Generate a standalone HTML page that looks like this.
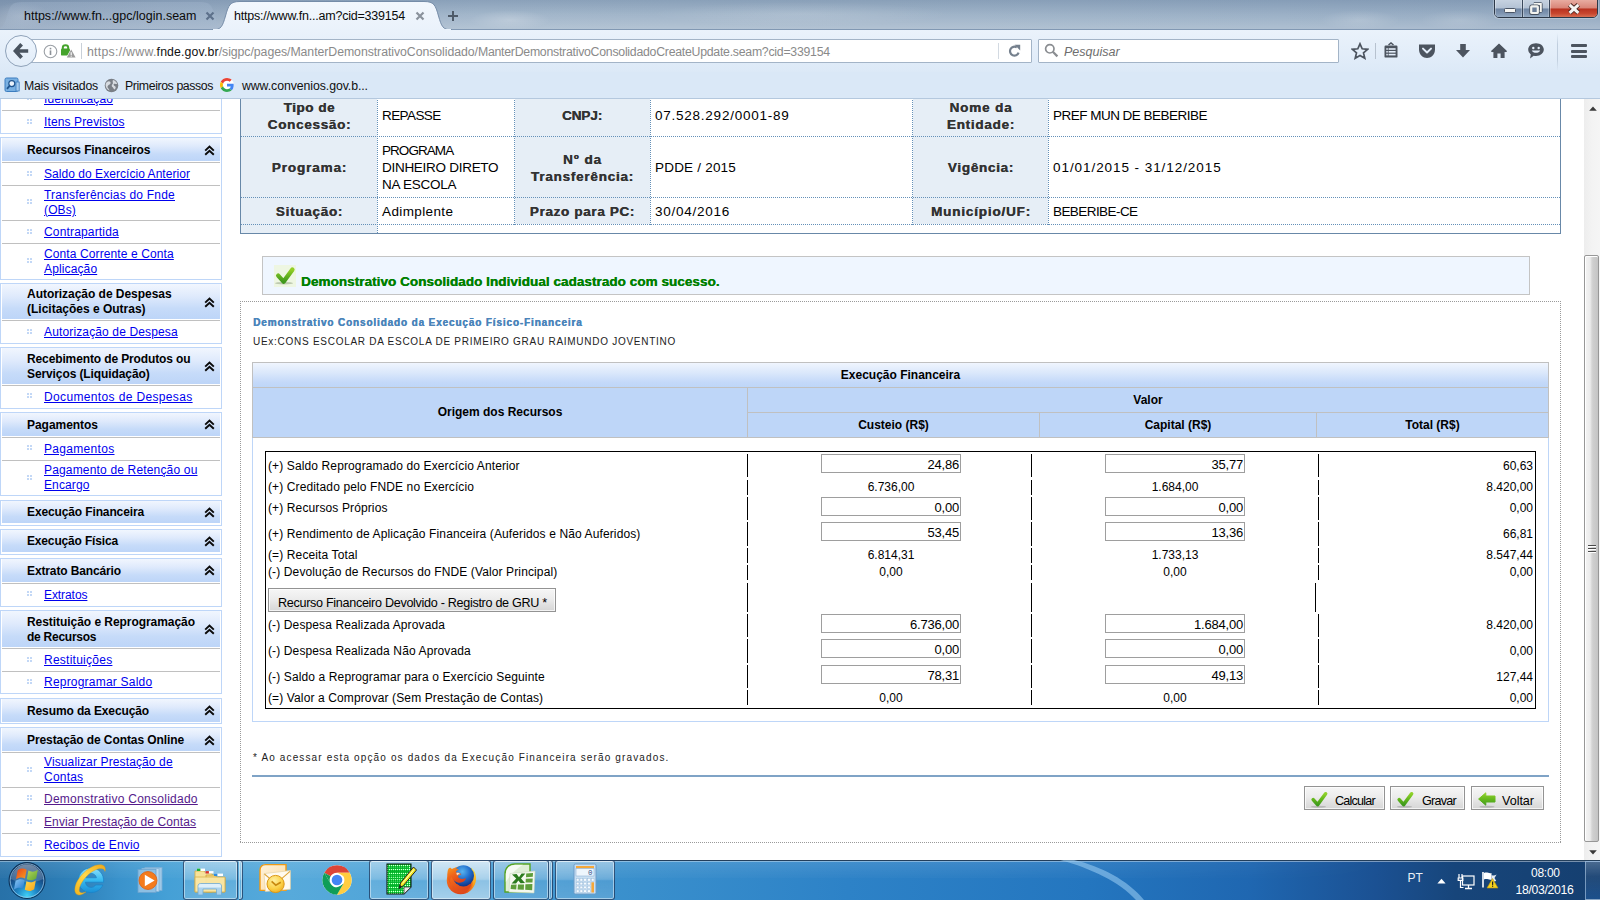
<!DOCTYPE html>
<html>
<head>
<meta charset="utf-8">
<title>SiGPC</title>
<style>
*{box-sizing:border-box;margin:0;padding:0}
html,body{width:1600px;height:900px;overflow:hidden;background:#fff;font-family:"Liberation Sans",sans-serif;font-size:12px;color:#000}
.abs{position:absolute}
#titlebar{position:absolute;left:0;top:0;width:1600px;height:30px;background:linear-gradient(90deg,#8b9fb7 0%,#99adc3 10%,#a3b7cb 30%,#a1b5c9 55%,#9cb1c7 80%,#96abc2 100%);}
#titlebar .shade{position:absolute;left:0;top:0;width:1600px;height:30px;background:radial-gradient(ellipse 40px 10px at 510px 20px,rgba(255,255,255,.22),rgba(255,255,255,0)),radial-gradient(ellipse 150px 12px at 800px 14px,rgba(255,255,255,.13),rgba(255,255,255,0)),radial-gradient(ellipse 40px 10px at 1360px 20px,rgba(255,255,255,.16),rgba(255,255,255,0)),radial-gradient(ellipse 40px 10px at 1460px 20px,rgba(255,255,255,.14),rgba(255,255,255,0)),radial-gradient(ellipse 30px 14px at 20px 16px,rgba(255,255,255,.2),rgba(255,255,255,0)),linear-gradient(180deg,rgba(95,122,155,.36) 0%,rgba(255,255,255,0) 50%,rgba(255,255,255,.2) 100%)}
#navbar{position:absolute;left:0;top:30px;width:1600px;height:42px;background:linear-gradient(180deg,#eaf2fb 0%,#e2edf9 60%,#dce9f7 100%)}
#bmbar{position:absolute;left:0;top:72px;width:1600px;height:27px;background:#dae8f7;border-bottom:1px solid #b4c8de}
#page{position:absolute;left:0;top:99px;width:1584px;height:761px;background:#fff;overflow:hidden}
#pagein{position:absolute;left:0;top:-99px;width:1584px;height:900px}
#vscroll{position:absolute;left:1584px;top:99px;width:16px;height:761px;background:#f0f0f0}
#taskbar{position:absolute;left:0;top:858px;width:1600px;height:42px;background:linear-gradient(90deg,#2771a8 0%,#2a78b0 2.5%,#2f82bb 5%,#3a93cc 7.5%,#45a0d6 10.5%,#57aadb 18%,#52a6d9 23%,#469cd4 31%,#3b91cd 38%,#2d82c7 53%,#2476bf 68%,#1f67b1 78%,#1b5193 86%,#17457a 91%,#153f70 100%)}
.tabtxt{position:absolute;top:9px;font-size:12.5px;color:#0a0a0a;white-space:nowrap}
.bm{position:absolute;top:79px;font-size:12.3px;color:#111;white-space:nowrap}
</style>
</head>
<body>
<!-- ===== TITLE BAR / TABS ===== -->
<div id="titlebar"><div class="shade"></div>
<svg class="abs" style="left:0;top:0" width="1600" height="30" viewBox="0 0 1600 30">
  <defs>
    <linearGradient id="tabg" x1="0" y1="0" x2="0" y2="1"><stop offset="0" stop-color="#f2f7fd"/><stop offset="1" stop-color="#eaf2fb"/></linearGradient>
    <linearGradient id="itab" x1="0" y1="0" x2="0" y2="1"><stop offset="0" stop-color="#a9bcd3"/><stop offset="1" stop-color="#a2b6ce"/></linearGradient>
  </defs>
  <path d="M-8 30 C2 30 4 26 7 16 C10 5 12 2 22 2 L200 2 C210 2 212 5 215 16 C218 26 220 29.5 232 29.5 L-8 29.5 Z" fill="url(#itab)" opacity=".3"/>
  <rect x="0" y="29" width="1600" height="1" fill="#8198b3"/>
  <path d="M212 30 C221.5 30 222.5 26 225.5 16 C228.5 5 230 1.5 240 1.5 L424 1.5 C434 1.5 435.5 5 438.5 16 C441.5 26 442.5 30 452 30 Z" fill="url(#tabg)" stroke="#758ca8" stroke-width="1"/>
  <rect x="213" y="29" width="238" height="1.5" fill="#eaf2fb"/>
</svg>
</div>
<div class="tabtxt" style="left:24px;letter-spacing:0.006px">https://www.fn...gpc/login.seam</div>
<div class="tabtxt" style="left:234px;letter-spacing:-0.218px">https://www.fn...am?cid=339154</div>
<svg class="abs" style="left:205px;top:11px" width="10" height="10" viewBox="0 0 10 10"><path d="M1.5 1.5 L8.5 8.5 M8.5 1.5 L1.5 8.5" stroke="#5d718b" stroke-width="2.2"/></svg>
<svg class="abs" style="left:415px;top:11px" width="10" height="10" viewBox="0 0 10 10"><path d="M1.5 1.5 L8.5 8.5 M8.5 1.5 L1.5 8.5" stroke="#8a929c" stroke-width="2.2"/></svg>
<svg class="abs" style="left:447px;top:10px" width="12" height="12" viewBox="0 0 12 12"><path d="M6 1 V11 M1 6 H11" stroke="#4e5a68" stroke-width="2"/></svg>
<!-- window controls -->
<div class="abs" style="left:1494px;top:-1px;width:104px;height:19px;border:1px solid #2c3848;border-radius:0 0 5px 5px;overflow:hidden;background:#aebfd3;box-shadow:0 0 0 1px rgba(255,255,255,.25)">
  <div class="abs" style="left:0;top:0;width:28px;height:18px;background:linear-gradient(180deg,#c6d2e0 0%,#b3c2d4 44%,#6f86a4 50%,#7f95b1 75%,#9db2ca 100%);border-right:1px solid #3b495c;box-shadow:inset 1px 0 0 rgba(255,255,255,.35),inset -1px 0 0 rgba(255,255,255,.25)"></div>
  <div class="abs" style="left:28px;top:0;width:27px;height:18px;background:linear-gradient(180deg,#c6d2e0 0%,#b3c2d4 44%,#6f86a4 50%,#7f95b1 75%,#9db2ca 100%);border-right:1px solid #3b495c;box-shadow:inset 1px 0 0 rgba(255,255,255,.35),inset -1px 0 0 rgba(255,255,255,.25)"></div>
  <div class="abs" style="left:55px;top:0;width:48px;height:18px;background:linear-gradient(180deg,#e8aca1 0%,#d98578 44%,#b83220 50%,#c8462e 75%,#dd7a5c 100%);box-shadow:inset 1px 0 0 rgba(255,255,255,.35),inset -1px 0 0 rgba(255,255,255,.25)"></div>
  <div class="abs" style="left:9px;top:8px;width:12px;height:5px;background:#f6f6f3;border:1px solid #4a5566;border-radius:1.5px"></div>
  <svg class="abs" style="left:33.5px;top:1.5px" width="14" height="13" viewBox="0 0 14 13"><path d="M4.8 2 H11.8 V9 H9.5" fill="none" stroke="#46505f" stroke-width="3.6" stroke-linejoin="round"/><path d="M4.8 2 H11.8 V9 H9.5" fill="none" stroke="#f4f4f0" stroke-width="2"/><rect x="2.2" y="4.4" width="6.6" height="6.6" rx=".6" fill="none" stroke="#46505f" stroke-width="3.8"/><rect x="2.2" y="4.4" width="6.6" height="6.6" rx=".6" fill="#6c7f99" stroke="#f4f4f0" stroke-width="2.2"/></svg>
  <svg class="abs" style="left:72px;top:3px" width="14" height="12" viewBox="0 0 14 12"><path d="M2.6 1.8 L11.4 9.8 M11.4 1.8 L2.6 9.8" stroke="#4a2620" stroke-width="4.8"/><path d="M2.6 1.8 L11.4 9.8 M11.4 1.8 L2.6 9.8" stroke="#f6f4f2" stroke-width="3"/></svg>
</div>

<!-- ===== NAV BAR ===== -->
<div id="navbar"></div>
<div id="bmbar"></div>
<!-- NAV -->
<!-- url field -->
<div class="abs" style="left:26px;top:39px;width:1006px;height:24px;background:#fff;border:1px solid #a3b4c7;border-radius:1px"></div>
<!-- back button -->
<div class="abs" style="left:5px;top:35px;width:32px;height:32px;border-radius:16px;background:linear-gradient(180deg,#eef5fd,#e2edf9);border:1px solid #8fa2b9"></div>
<svg class="abs" style="left:13px;top:42px" width="17" height="18" viewBox="0 0 17 18"><path d="M8.6 2.2 L2.4 9 L8.6 15.8 M3 9 H15.2" fill="none" stroke="#49535f" stroke-width="3.7" stroke-linejoin="miter"/></svg>
<!-- info -->
<svg class="abs" style="left:42.5px;top:43.5px" width="15" height="15" viewBox="0 0 15 15"><circle cx="7.5" cy="7.5" r="6.3" fill="none" stroke="#9a9fa5" stroke-width="1.1"/><rect x="6.7" y="6.4" width="1.6" height="4.6" fill="#8d9298"/><rect x="6.7" y="3.8" width="1.6" height="1.6" fill="#8d9298"/></svg>
<!-- lock w/ warning -->
<svg class="abs" style="left:60px;top:43px" width="17" height="16" viewBox="0 0 17 16"><path d="M2.8 6 V4.6 C2.8 1.4 8.2 1.4 8.2 4.6 V6" fill="none" stroke="#45a32c" stroke-width="2"/><rect x="1" y="5.6" width="9" height="7" rx="1.2" fill="#45a32c"/><path d="M11.2 5.2 L16.6 15.2 H5.8 Z" fill="#fff"/><path d="M11.2 6.6 L15.6 14.6 H6.8 Z" fill="#9c9c9c"/><rect x="10.65" y="9.2" width="1.1" height="2.8" fill="#fff"/><rect x="10.65" y="12.6" width="1.1" height="1.1" fill="#fff"/></svg>
<div class="abs" style="left:81px;top:43px;width:1px;height:16px;background:#c9d0d8"></div>
<div class="abs" id="url" style="left:87px;top:45px;font-size:12.3px;white-space:nowrap"><span style="color:#8a8a8a;letter-spacing:0.275px">https://www.</span><span style="color:#111;letter-spacing:0.134px">fnde.gov.br</span><span style="color:#8a8a8a;letter-spacing:-0.058px">/sigpc/pages/ManterDemonstrativoConsolidado/</span><span style="color:#8a8a8a;letter-spacing:-0.256px">ManterDemonstrativoConsolidadoCreateUpdate.seam?cid=339154</span></div>
<div class="abs" style="left:998px;top:43px;width:1px;height:16px;background:#d3dae2"></div>
<!-- reload -->
<svg class="abs" style="left:1008px;top:44px" width="14" height="14" viewBox="0 0 14 14"><path d="M10.6 8.6 A4.4 4.4 0 1 1 8.8 3.4" fill="none" stroke="#75808d" stroke-width="2.2"/><path d="M6.6 0.8 L12.2 0.8 L12.2 6.4 Z" fill="#75808d"/></svg>
<!-- search -->
<div class="abs" style="left:1038px;top:39px;width:301px;height:24px;background:#fff;border:1px solid #a3b4c7;border-radius:1px"></div>
<svg class="abs" style="left:1044px;top:43px" width="15" height="15" viewBox="0 0 15 15"><circle cx="5.8" cy="5.8" r="4.2" fill="none" stroke="#8a8d91" stroke-width="1.7"/><path d="M8.8 8.8 L13.4 13.4" stroke="#8a8d91" stroke-width="2.2"/></svg>
<div class="abs" style="left:1064px;top:45px;font-size:12.5px;font-style:italic;color:#6e6e6e">Pesquisar</div>
<!-- toolbar icons -->
<svg class="abs" style="left:1351px;top:42px" width="18" height="18" viewBox="0 0 18 18"><path d="M9 1.8 L11.2 6.8 L16.6 7.3 L12.5 10.9 L13.8 16.2 L9 13.4 L4.2 16.2 L5.5 10.9 L1.4 7.3 L6.8 6.8 Z" fill="none" stroke="#4c545f" stroke-width="1.7" stroke-linejoin="miter"/></svg>
<div class="abs" style="left:1375px;top:43px;width:1px;height:16px;background:#b7c2cf"></div>
<svg class="abs" style="left:1383px;top:42px" width="16" height="17" viewBox="0 0 16 17"><path d="M5.5 3 L8 1 L10.5 3" fill="none" stroke="#4c545f" stroke-width="1.6"/><rect x="1.5" y="3.6" width="13" height="12" rx="1.2" fill="#4c545f"/><rect x="5.6" y="6.2" width="7" height="1.6" fill="#e4eefa"/><rect x="5.6" y="9" width="7" height="1.6" fill="#e4eefa"/><rect x="5.6" y="11.8" width="7" height="1.6" fill="#e4eefa"/><rect x="3.3" y="6.2" width="1.5" height="1.6" fill="#e4eefa"/><rect x="3.3" y="9" width="1.5" height="1.6" fill="#e4eefa"/><rect x="3.3" y="11.8" width="1.5" height="1.6" fill="#e4eefa"/></svg>
<svg class="abs" style="left:1418px;top:43px" width="18" height="16" viewBox="0 0 18 16"><path d="M1 1.5 H17 V6.5 C17 11.5 13 15 9 15 C5 15 1 11.5 1 6.5 Z" fill="#4c545f"/><path d="M5 5.6 L9 9.4 L13 5.6" fill="none" stroke="#e4eefa" stroke-width="2" stroke-linecap="round" stroke-linejoin="round"/></svg>
<svg class="abs" style="left:1455px;top:43px" width="16" height="16" viewBox="0 0 16 16"><path d="M5.2 1 H10.8 V7 H15 L8 14.6 L1 7 H5.2 Z" fill="#4c545f"/></svg>
<svg class="abs" style="left:1490px;top:43px" width="18" height="16" viewBox="0 0 18 16"><path d="M9 1.2 L17 9 H14.6 V15 H10.6 V10.4 H7.4 V15 H3.4 V9 H1 Z" fill="#4c545f"/><path d="M1.6 8.6 L9 1.6 L16.4 8.6" fill="none" stroke="#4c545f" stroke-width="1.6"/></svg>
<svg class="abs" style="left:1527px;top:42px" width="18" height="18" viewBox="0 0 18 18"><path d="M9 1.2 C13.6 1.2 16.8 4 16.8 7.6 C16.8 11.2 13.6 14 9 14 C8.2 14 7.4 13.9 6.7 13.7 L3 16.4 L3.8 12.4 C2.2 11.2 1.2 9.5 1.2 7.6 C1.2 4 4.4 1.2 9 1.2 Z" fill="#4c545f"/><circle cx="6.3" cy="6" r="1.2" fill="#e4eefa"/><circle cx="11.7" cy="6" r="1.2" fill="#e4eefa"/><path d="M4.8 8.4 C6 11.6 12 11.6 13.2 8.4 Z" fill="#e4eefa"/></svg>
<div class="abs" style="left:1557px;top:33px;width:1px;height:38px;background:linear-gradient(180deg,rgba(180,195,212,0),#c0cede 30%,#c0cede 70%,rgba(180,195,212,0))"></div>
<div class="abs" style="left:1571px;top:44px;width:16px;height:3px;background:#4c545f;border-radius:1px"></div>
<div class="abs" style="left:1571px;top:49.5px;width:16px;height:3px;background:#4c545f;border-radius:1px"></div>
<div class="abs" style="left:1571px;top:55px;width:16px;height:3px;background:#4c545f;border-radius:1px"></div>
<!-- bookmarks -->
<svg class="abs" style="left:4px;top:77px" width="16" height="16" viewBox="0 0 16 16"><rect x="1" y="1" width="13" height="13.5" rx="1.5" fill="#79b0e2" stroke="#3c7dbf" stroke-width="1"/><rect x="12" y="5" width="3.2" height="9" fill="#a5cbee" stroke="#3c7dbf" stroke-width=".8"/><circle cx="7.8" cy="6.6" r="3" fill="#eaf3fc" stroke="#1f5590" stroke-width="1.2"/><path d="M5.6 8.8 L3 11.8" stroke="#1f5590" stroke-width="1.8"/></svg>
<div class="bm" style="left:24px;letter-spacing:-0.232px">Mais visitados</div>
<svg class="abs" style="left:104px;top:78px" width="15" height="15" viewBox="0 0 15 15"><circle cx="7.5" cy="7.5" r="6.8" fill="#7a7f86"/><path d="M3 4 C5 2.5 7 3.5 6.5 5.5 C6 7 4 6.5 3.5 8.5 C3.2 10 5 10.5 5.5 12.5 C3 11.5 1.6 9 1.6 7 C1.8 5.6 2.2 4.8 3 4 Z M9 2 C11 2.4 12.6 4 13.2 6 C12 6.4 11.4 5.4 10.2 5.8 C9 6.2 9.8 8 11 8.2 C12 8.4 12 10 10.6 11.6 C9.4 11 9.4 9.6 8.4 9 C7.4 8.4 7.6 6.8 8.6 6 C9.6 5.2 8 3.4 9 2 Z" fill="#d7dbe0"/></svg>
<div class="bm" style="left:125px;letter-spacing:-0.396px">Primeiros passos</div>
<svg class="abs" style="left:220px;top:78px" width="14" height="14" viewBox="0 0 48 48"><circle cx="24" cy="24" r="24" fill="#fff"/><path fill="#EA4335" d="M24 9.5c3.54 0 6.71 1.22 9.21 3.6l6.85-6.85C35.9 2.38 30.47 0 24 0 14.62 0 6.51 5.38 2.56 13.22l7.98 6.19C12.43 13.72 17.74 9.5 24 9.5z"/><path fill="#4285F4" d="M46.98 24.55c0-1.57-.15-3.09-.38-4.55H24v9.02h12.94c-.58 2.96-2.26 5.48-4.78 7.18l7.73 6c4.51-4.18 7.09-10.36 7.09-17.65z"/><path fill="#FBBC05" d="M10.53 28.59c-.48-1.45-.76-2.99-.76-4.59s.27-3.14.76-4.59l-7.98-6.19C.92 16.46 0 20.12 0 24c0 3.88.92 7.54 2.56 10.78l7.97-6.19z"/><path fill="#34A853" d="M24 48c6.48 0 11.93-2.13 15.89-5.81l-7.73-6c-2.15 1.45-4.92 2.3-8.16 2.3-6.26 0-11.57-4.22-13.47-9.91l-7.98 6.19C6.51 42.62 14.62 48 24 48z"/></svg>
<div class="bm" style="left:242px;letter-spacing:-0.074px">www.convenios.gov.b...</div>

<!-- /NAV -->

<!-- ===== PAGE ===== -->
<div id="page"><div id="pagein">
<!-- SIDEBAR -->
<style>
.sb-b{position:absolute;background:#bed6f8}
.sb-g{position:absolute;left:2px;width:218px;height:1px;background:#c0c0c0}
.sb-h{position:absolute;left:2px;width:218px;background:linear-gradient(180deg,#f1f6fe 0%,#dfeafc 35%,#c6dbf9 70%,#bdd5f8 100%);font-weight:bold;font-size:12px;line-height:15px;color:#000;display:flex;align-items:center;padding-left:25px;padding-top:1px;white-space:nowrap;letter-spacing:-0.06px}
.sb-i{position:absolute;left:44px;width:170px;font-size:12px;line-height:15px;display:flex;align-items:center;white-space:nowrap;letter-spacing:0.13px}
.sb-i span{color:#0000ee;text-decoration:underline}
.sb-i.v span{color:#551a8b}
.sb-d{position:absolute;left:26.5px;width:5px;height:5px;background:
 linear-gradient(#c3d8f6,#c3d8f6) 0 0/2px 2px no-repeat,linear-gradient(#c3d8f6,#c3d8f6) 3px 0/2px 2px no-repeat,
 linear-gradient(#c3d8f6,#c3d8f6) 0 3px/2px 2px no-repeat,linear-gradient(#c3d8f6,#c3d8f6) 3px 3px/2px 2px no-repeat}
.sb-c{position:absolute;left:204px;width:11px;height:11px}
</style>
<div class="sb-b" style="left:0;top:60px;width:222px;height:1px"></div>
<div class="sb-b" style="left:0;top:133px;width:222px;height:1px"></div>
<div class="sb-b" style="left:0;top:60px;width:1px;height:74px"></div>
<div class="sb-b" style="left:221px;top:60px;width:1px;height:74px"></div>
<div class="sb-i" style="top:88px;height:22px"><div><span>Identificação</span></div></div>
<div class="sb-d" style="top:95px"></div>
<div class="sb-g" style="top:110px"></div>
<div class="sb-i" style="top:111px;height:22px"><div><span style="letter-spacing:0.127px">Itens Previstos</span></div></div>
<div class="sb-d" style="top:119px"></div>
<div class="sb-b" style="left:0;top:137px;width:222px;height:1px"></div>
<div class="sb-b" style="left:0;top:279px;width:222px;height:1px"></div>
<div class="sb-b" style="left:0;top:137px;width:1px;height:143px"></div>
<div class="sb-b" style="left:221px;top:137px;width:1px;height:143px"></div>
<div class="sb-h" style="top:138px;height:23px"><div><span style="letter-spacing:-0.099px">Recursos Financeiros</span></div></div>
<svg class="sb-c" style="top:145px" viewBox="0 0 11 11"><path d="M1.2 5.6 L5.5 1.6 L9.8 5.6 M1.2 9.8 L5.5 5.8 L9.8 9.8" fill="none" stroke="#0a0a0a" stroke-width="1.95"/></svg>
<div class="sb-g" style="top:162px"></div>
<div class="sb-i" style="top:163px;height:22px"><div><span style="letter-spacing:0.046px">Saldo do Exercício Anterior</span></div></div>
<div class="sb-d" style="top:171px"></div>
<div class="sb-g" style="top:185px"></div>
<div class="sb-i" style="top:186px;height:34px"><div><span style="letter-spacing:0.214px">Transferências do Fnde</span><br><span>(OBs)</span></div></div>
<div class="sb-d" style="top:199px"></div>
<div class="sb-g" style="top:220px"></div>
<div class="sb-i" style="top:221px;height:22px"><div><span style="letter-spacing:0.161px">Contrapartida</span></div></div>
<div class="sb-d" style="top:229px"></div>
<div class="sb-g" style="top:243px"></div>
<div class="sb-i" style="top:244px;height:35px"><div><span style="letter-spacing:0.109px">Conta Corrente e Conta</span><br><span>Aplicação</span></div></div>
<div class="sb-d" style="top:258px"></div>
<div class="sb-b" style="left:0;top:283px;width:222px;height:1px"></div>
<div class="sb-b" style="left:0;top:343px;width:222px;height:1px"></div>
<div class="sb-b" style="left:0;top:283px;width:1px;height:61px"></div>
<div class="sb-b" style="left:221px;top:283px;width:1px;height:61px"></div>
<div class="sb-h" style="top:284px;height:35px"><div><span style="letter-spacing:-0.034px">Autorização de Despesas</span><br><span style="letter-spacing:-0.005px">(Licitações e Outras)</span></div></div>
<svg class="sb-c" style="top:297px" viewBox="0 0 11 11"><path d="M1.2 5.6 L5.5 1.6 L9.8 5.6 M1.2 9.8 L5.5 5.8 L9.8 9.8" fill="none" stroke="#0a0a0a" stroke-width="1.95"/></svg>
<div class="sb-g" style="top:320px"></div>
<div class="sb-i" style="top:321px;height:22px"><div><span style="letter-spacing:0.139px">Autorização de Despesa</span></div></div>
<div class="sb-d" style="top:329px"></div>
<div class="sb-b" style="left:0;top:347px;width:222px;height:1px"></div>
<div class="sb-b" style="left:0;top:408px;width:222px;height:1px"></div>
<div class="sb-b" style="left:0;top:347px;width:1px;height:62px"></div>
<div class="sb-b" style="left:221px;top:347px;width:1px;height:62px"></div>
<div class="sb-h" style="top:348px;height:36px"><div><span style="letter-spacing:-0.126px">Recebimento de Produtos ou</span><br><span style="letter-spacing:-0.100px">Serviços (Liquidação)</span></div></div>
<svg class="sb-c" style="top:361px" viewBox="0 0 11 11"><path d="M1.2 5.6 L5.5 1.6 L9.8 5.6 M1.2 9.8 L5.5 5.8 L9.8 9.8" fill="none" stroke="#0a0a0a" stroke-width="1.95"/></svg>
<div class="sb-g" style="top:385px"></div>
<div class="sb-i" style="top:386px;height:22px"><div><span style="letter-spacing:0.357px">Documentos de Despesas</span></div></div>
<div class="sb-d" style="top:393px"></div>
<div class="sb-b" style="left:0;top:412px;width:222px;height:1px"></div>
<div class="sb-b" style="left:0;top:495px;width:222px;height:1px"></div>
<div class="sb-b" style="left:0;top:412px;width:1px;height:84px"></div>
<div class="sb-b" style="left:221px;top:412px;width:1px;height:84px"></div>
<div class="sb-h" style="top:413px;height:23px"><div><span style="letter-spacing:-0.036px">Pagamentos</span></div></div>
<svg class="sb-c" style="top:419px" viewBox="0 0 11 11"><path d="M1.2 5.6 L5.5 1.6 L9.8 5.6 M1.2 9.8 L5.5 5.8 L9.8 9.8" fill="none" stroke="#0a0a0a" stroke-width="1.95"/></svg>
<div class="sb-g" style="top:437px"></div>
<div class="sb-i" style="top:438px;height:22px"><div><span style="letter-spacing:0.312px">Pagamentos</span></div></div>
<div class="sb-d" style="top:445px"></div>
<div class="sb-g" style="top:460px"></div>
<div class="sb-i" style="top:461px;height:34px"><div><span style="letter-spacing:0.169px">Pagamento de Retenção ou</span><br><span style="letter-spacing:0.115px">Encargo</span></div></div>
<div class="sb-d" style="top:475px"></div>
<div class="sb-b" style="left:0;top:500px;width:222px;height:1px"></div>
<div class="sb-b" style="left:0;top:525px;width:222px;height:1px"></div>
<div class="sb-b" style="left:0;top:500px;width:1px;height:26px"></div>
<div class="sb-b" style="left:221px;top:500px;width:1px;height:26px"></div>
<div class="sb-h" style="top:501px;height:22px"><div><span style="letter-spacing:-0.126px">Execução Financeira</span></div></div>
<svg class="sb-c" style="top:507px" viewBox="0 0 11 11"><path d="M1.2 5.6 L5.5 1.6 L9.8 5.6 M1.2 9.8 L5.5 5.8 L9.8 9.8" fill="none" stroke="#0a0a0a" stroke-width="1.95"/></svg>
<div class="sb-b" style="left:0;top:529px;width:222px;height:1px"></div>
<div class="sb-b" style="left:0;top:554px;width:222px;height:1px"></div>
<div class="sb-b" style="left:0;top:529px;width:1px;height:26px"></div>
<div class="sb-b" style="left:221px;top:529px;width:1px;height:26px"></div>
<div class="sb-h" style="top:530px;height:22px"><div><span style="letter-spacing:-0.159px">Execução Física</span></div></div>
<svg class="sb-c" style="top:536px" viewBox="0 0 11 11"><path d="M1.2 5.6 L5.5 1.6 L9.8 5.6 M1.2 9.8 L5.5 5.8 L9.8 9.8" fill="none" stroke="#0a0a0a" stroke-width="1.95"/></svg>
<div class="sb-b" style="left:0;top:558px;width:222px;height:1px"></div>
<div class="sb-b" style="left:0;top:606px;width:222px;height:1px"></div>
<div class="sb-b" style="left:0;top:558px;width:1px;height:49px"></div>
<div class="sb-b" style="left:221px;top:558px;width:1px;height:49px"></div>
<div class="sb-h" style="top:559px;height:23px"><div><span style="letter-spacing:-0.127px">Extrato Bancário</span></div></div>
<svg class="sb-c" style="top:565px" viewBox="0 0 11 11"><path d="M1.2 5.6 L5.5 1.6 L9.8 5.6 M1.2 9.8 L5.5 5.8 L9.8 9.8" fill="none" stroke="#0a0a0a" stroke-width="1.95"/></svg>
<div class="sb-g" style="top:583px"></div>
<div class="sb-i" style="top:584px;height:22px"><div><span style="letter-spacing:-0.077px">Extratos</span></div></div>
<div class="sb-d" style="top:591px"></div>
<div class="sb-b" style="left:0;top:610px;width:222px;height:1px"></div>
<div class="sb-b" style="left:0;top:693px;width:222px;height:1px"></div>
<div class="sb-b" style="left:0;top:610px;width:1px;height:84px"></div>
<div class="sb-b" style="left:221px;top:610px;width:1px;height:84px"></div>
<div class="sb-h" style="top:611px;height:36px"><div><span style="letter-spacing:-0.052px">Restituição e Reprogramação</span><br><span style="letter-spacing:-0.250px">de Recursos</span></div></div>
<svg class="sb-c" style="top:624px" viewBox="0 0 11 11"><path d="M1.2 5.6 L5.5 1.6 L9.8 5.6 M1.2 9.8 L5.5 5.8 L9.8 9.8" fill="none" stroke="#0a0a0a" stroke-width="1.95"/></svg>
<div class="sb-g" style="top:648px"></div>
<div class="sb-i" style="top:649px;height:22px"><div><span style="letter-spacing:0.253px">Restituições</span></div></div>
<div class="sb-d" style="top:657px"></div>
<div class="sb-g" style="top:671px"></div>
<div class="sb-i" style="top:672px;height:21px"><div><span style="letter-spacing:0.210px">Reprogramar Saldo</span></div></div>
<div class="sb-d" style="top:679px"></div>
<div class="sb-b" style="left:0;top:698px;width:222px;height:1px"></div>
<div class="sb-b" style="left:0;top:723px;width:222px;height:1px"></div>
<div class="sb-b" style="left:0;top:698px;width:1px;height:26px"></div>
<div class="sb-b" style="left:221px;top:698px;width:1px;height:26px"></div>
<div class="sb-h" style="top:699px;height:23px"><div><span style="letter-spacing:-0.114px">Resumo da Execução</span></div></div>
<svg class="sb-c" style="top:705px" viewBox="0 0 11 11"><path d="M1.2 5.6 L5.5 1.6 L9.8 5.6 M1.2 9.8 L5.5 5.8 L9.8 9.8" fill="none" stroke="#0a0a0a" stroke-width="1.95"/></svg>
<div class="sb-b" style="left:0;top:727px;width:222px;height:1px"></div>
<div class="sb-b" style="left:0;top:856px;width:222px;height:1px"></div>
<div class="sb-b" style="left:0;top:727px;width:1px;height:130px"></div>
<div class="sb-b" style="left:221px;top:727px;width:1px;height:130px"></div>
<div class="sb-h" style="top:728px;height:23px"><div><span style="letter-spacing:-0.092px">Prestação de Contas Online</span></div></div>
<svg class="sb-c" style="top:735px" viewBox="0 0 11 11"><path d="M1.2 5.6 L5.5 1.6 L9.8 5.6 M1.2 9.8 L5.5 5.8 L9.8 9.8" fill="none" stroke="#0a0a0a" stroke-width="1.95"/></svg>
<div class="sb-g" style="top:752px"></div>
<div class="sb-i" style="top:753px;height:34px"><div><span style="letter-spacing:0.124px">Visualizar Prestação de</span><br><span style="letter-spacing:0.213px">Contas</span></div></div>
<div class="sb-d" style="top:767px"></div>
<div class="sb-g" style="top:787px"></div>
<div class="sb-i v" style="top:788px;height:22px"><div><span style="letter-spacing:0.255px">Demonstrativo Consolidado</span></div></div>
<div class="sb-d" style="top:795px"></div>
<div class="sb-g" style="top:810px"></div>
<div class="sb-i v" style="top:811px;height:22px"><div><span style="letter-spacing:0.107px">Enviar Prestação de Contas</span></div></div>
<div class="sb-d" style="top:819px"></div>
<div class="sb-g" style="top:833px"></div>
<div class="sb-i" style="top:834px;height:22px"><div><span style="letter-spacing:0.132px">Recibos de Envio</span></div></div>
<div class="sb-d" style="top:841px"></div>
<!-- /SIDEBAR -->
<!-- MAIN -->
<style>
.vl{position:absolute;white-space:nowrap;font-size:13.5px;line-height:17px;color:#000}
.lb{position:absolute;white-space:nowrap;font-size:13.5px;line-height:17px;font-weight:bold;color:#333;text-shadow:0.35px 0 0 #333;text-align:center;transform:translateX(-50%)}
.dh{position:absolute;height:1px;background-image:linear-gradient(90deg,#6490b8 50%,rgba(255,255,255,0) 50%);background-size:2px 1px}
.dv{position:absolute;width:1px;background-image:linear-gradient(180deg,#6490b8 50%,rgba(255,255,255,0) 50%);background-size:1px 2px}
.lbg{position:absolute;background:#e6eef6}
.th{position:absolute;background:#bed6f8;font-weight:bold;font-size:12px;color:#000;display:flex;align-items:center;justify-content:center;white-space:nowrap}
.rt{position:absolute;left:268px;font-size:12px;line-height:14px;white-space:nowrap;color:#000;letter-spacing:0.12px}
.cv{position:absolute;font-size:12px;line-height:14px;white-space:nowrap;color:#000;transform:translateX(-50%)}
.rv{position:absolute;font-size:12px;line-height:14px;white-space:nowrap;color:#000;right:51px}
.inp{position:absolute;width:140px;height:19px;background:#fff;border:1px solid #9e9e9e;font-size:13px;line-height:17px;text-align:right;padding-right:1px;padding-top:1px;letter-spacing:-0.2px}
.vb{position:absolute;width:1px;background:#000}
.btn{position:absolute;height:24px;border:1px solid #939393;background:linear-gradient(180deg,#f6f6f6 0%,#ececec 45%,#dfdfdf 75%,#d6d6d6 100%);font-size:13px;white-space:nowrap;color:#000;box-shadow:inset 0 0 0 1px rgba(255,255,255,.7)}
.btn span{position:absolute;top:5.5px;line-height:16px;font-size:12.6px}
</style>
<div class="abs" style="left:240px;top:60px;width:1321px;height:174px;border:1px solid #6888a8"></div>
<div class="lbg" style="left:241px;top:90px;width:136px;height:134px"></div>
<div class="lbg" style="left:515px;top:90px;width:135px;height:134px"></div>
<div class="lbg" style="left:913px;top:90px;width:135px;height:134px"></div>
<div class="lbg" style="left:241px;top:224px;width:136px;height:9px"></div>
<div class="dh" style="left:241px;top:136px;width:1319px"></div>
<div class="dh" style="left:241px;top:197px;width:1319px"></div>
<div class="dh" style="left:241px;top:224px;width:1319px"></div>
<div class="dv" style="left:514px;top:90px;height:135px"></div>
<div class="dv" style="left:650px;top:90px;height:135px"></div>
<div class="dv" style="left:912px;top:90px;height:135px"></div>
<div class="dv" style="left:1048px;top:90px;height:135px"></div>
<div class="dv" style="left:377px;top:90px;height:143px"></div>
<div class="lb" style="left:309.0px;top:99.0px;letter-spacing:0.507px;padding-left:0.507px">Tipo de</div>
<div class="lb" style="left:309.0px;top:116.0px;letter-spacing:0.697px;padding-left:0.697px">Concessão:</div>
<div class="lb" style="left:309.0px;top:159.0px;letter-spacing:0.875px;padding-left:0.875px">Programa:</div>
<div class="lb" style="left:309.0px;top:203.0px;letter-spacing:0.715px;padding-left:0.715px">Situação:</div>
<div class="lb" style="left:582.0px;top:107.0px;letter-spacing:-0.062px;padding-left:-0.062px">CNPJ:</div>
<div class="lb" style="left:582.0px;top:151.0px;letter-spacing:0.963px;padding-left:0.963px">Nº da</div>
<div class="lb" style="left:582.0px;top:168.0px;letter-spacing:0.765px;padding-left:0.765px">Transferência:</div>
<div class="lb" style="left:582.0px;top:203.0px;letter-spacing:0.655px;padding-left:0.655px">Prazo para PC:</div>
<div class="lb" style="left:980.5px;top:99.0px;letter-spacing:0.870px;padding-left:0.870px">Nome da</div>
<div class="lb" style="left:980.5px;top:116.0px;letter-spacing:0.733px;padding-left:0.733px">Entidade:</div>
<div class="lb" style="left:980.5px;top:159.0px;letter-spacing:0.714px;padding-left:0.714px">Vigência:</div>
<div class="lb" style="left:980.5px;top:203.0px;letter-spacing:0.828px;padding-left:0.828px">Município/UF:</div>
<div class="vl" style="left:382.0px;top:107.0px;letter-spacing:-0.582px">REPASSE</div>
<div class="vl" style="left:382.0px;top:142.0px;letter-spacing:-0.945px">PROGRAMA</div>
<div class="vl" style="left:382.0px;top:159.0px;letter-spacing:-0.281px">DINHEIRO DIRETO</div>
<div class="vl" style="left:382.0px;top:176.0px;letter-spacing:-0.248px">NA ESCOLA</div>
<div class="vl" style="left:382.0px;top:203.0px;letter-spacing:0.376px">Adimplente</div>
<div class="vl" style="left:655.0px;top:107.0px;letter-spacing:0.758px">07.528.292/0001-89</div>
<div class="vl" style="left:655.0px;top:159.0px;letter-spacing:0.201px">PDDE / 2015</div>
<div class="vl" style="left:655.0px;top:203.0px;letter-spacing:0.743px">30/04/2016</div>
<div class="vl" style="left:1053.0px;top:107.0px;letter-spacing:-0.514px">PREF MUN DE BEBERIBE</div>
<div class="vl" style="left:1053.0px;top:159.0px;letter-spacing:0.933px">01/01/2015 - 31/12/2015</div>
<div class="vl" style="left:1053.0px;top:203.0px;letter-spacing:-0.571px">BEBERIBE-CE</div>
<div class="abs" style="left:262px;top:256px;width:1268px;height:39px;background:#eff6ff;border:1px solid #c4c4c4"></div>
<svg class="abs" style="left:274px;top:265px" width="22" height="22" viewBox="0 0 22 22"><defs><linearGradient id="mkg" x1="0" y1="0" x2="0" y2="1"><stop offset="0" stop-color="#93cf26"/><stop offset=".55" stop-color="#62b11e"/><stop offset="1" stop-color="#3f981d"/></linearGradient></defs><rect width="22" height="22" fill="#eef6e2"/><ellipse cx="10" cy="18.2" rx="9" ry="1.2" fill="#a9b79a" opacity=".7"/><path d="M4.2 10.6 L9.6 16.6 L18.4 4.6" fill="none" stroke="url(#mkg)" stroke-width="4.4" stroke-linecap="round" stroke-linejoin="round"/></svg>
<div class="abs" style="left:301px;top:273px;font-size:13.5px;line-height:17px;font-weight:bold;color:#008000;text-shadow:0.35px 0 0 #008000;white-space:nowrap;letter-spacing:0.048px">Demonstrativo Consolidado Individual cadastrado com sucesso.</div>
<div class="dh" style="left:240px;top:301px;width:1321px;background-image:linear-gradient(90deg,#9a9a9a 50%,rgba(255,255,255,0) 50%)"></div>
<div class="dh" style="left:240px;top:842px;width:1321px;background-image:linear-gradient(90deg,#9a9a9a 50%,rgba(255,255,255,0) 50%)"></div>
<div class="dv" style="left:240px;top:301px;height:542px;background-image:linear-gradient(180deg,#9a9a9a 50%,rgba(255,255,255,0) 50%)"></div>
<div class="dv" style="left:1560px;top:301px;height:542px;background-image:linear-gradient(180deg,#9a9a9a 50%,rgba(255,255,255,0) 50%)"></div>
<div class="abs" style="left:253px;top:316px;font-size:10px;line-height:13px;font-weight:bold;color:#4a84ba;text-shadow:0.4px 0 0 #4a84ba;white-space:nowrap;letter-spacing:0.858px">Demonstrativo Consolidado da Execução Físico-Financeira</div>
<div class="abs" style="left:253px;top:335px;font-size:10px;line-height:13px;color:#222;white-space:nowrap;letter-spacing:0.728px">UEx:CONS ESCOLAR DA ESCOLA DE PRIMEIRO GRAU RAIMUNDO JOVENTINO</div>
<div class="abs" style="left:252px;top:362px;width:1297px;height:360px;background:#bed6f8"></div>
<div class="abs" style="left:253px;top:438px;width:1295px;height:283px;background:#fff"></div>
<div class="abs" style="left:252px;top:362px;width:1297px;height:76px;background:#c0c0c0"></div>
<div class="th" style="left:253px;top:363px;width:1295px;height:24px;background:linear-gradient(180deg,#f0f5fe 0%,#dbe8fb 40%,#c4d9f9 80%,#bed6f8 100%)">Execução Financeira</div>
<div class="th" style="left:253px;top:388px;width:494px;height:49px;padding-bottom:1.5px">Origem dos Recursos</div>
<div class="th" style="left:748px;top:388px;width:800px;height:24px">Valor</div>
<div class="th" style="left:748px;top:413px;width:291px;height:24px">Custeio (R$)</div>
<div class="th" style="left:1040px;top:413px;width:276px;height:24px">Capital (R$)</div>
<div class="th" style="left:1317px;top:413px;width:231px;height:24px">Total (R$)</div>
<div class="abs" style="left:265px;top:451px;width:1271px;height:258px;border:1px solid #000"></div>
<div class="vb" style="left:747px;top:454px;height:23px"></div>
<div class="vb" style="left:1031px;top:454px;height:23px"></div>
<div class="vb" style="left:1318px;top:454px;height:23px"></div>
<div class="rt" style="top:459.0px">(+) Saldo Reprogramado do Exercício Anterior</div>
<div class="inp" style="left:821px;top:454px">24,86</div>
<div class="inp" style="left:1105px;top:454px">35,77</div>
<div class="rv" style="top:459.0px">60,63</div>
<div class="vb" style="left:747px;top:480px;height:15px"></div>
<div class="vb" style="left:1031px;top:480px;height:15px"></div>
<div class="vb" style="left:1318px;top:480px;height:15px"></div>
<div class="rt" style="top:480.0px">(+) Creditado pelo FNDE no Exercício</div>
<div class="cv" style="left:891px;top:480.0px">6.736,00</div>
<div class="cv" style="left:1175px;top:480.0px">1.684,00</div>
<div class="rv" style="top:480.0px">8.420,00</div>
<div class="vb" style="left:747px;top:497px;height:23px"></div>
<div class="vb" style="left:1031px;top:497px;height:23px"></div>
<div class="vb" style="left:1318px;top:497px;height:23px"></div>
<div class="rt" style="top:501.0px">(+) Recursos Próprios</div>
<div class="inp" style="left:821px;top:497px">0,00</div>
<div class="inp" style="left:1105px;top:497px">0,00</div>
<div class="rv" style="top:501.0px">0,00</div>
<div class="vb" style="left:747px;top:522px;height:24px"></div>
<div class="vb" style="left:1031px;top:522px;height:24px"></div>
<div class="vb" style="left:1318px;top:522px;height:24px"></div>
<div class="rt" style="top:527.0px">(+) Rendimento de Aplicação Financeira (Auferidos e Não Auferidos)</div>
<div class="inp" style="left:821px;top:522px">53,45</div>
<div class="inp" style="left:1105px;top:522px">13,36</div>
<div class="rv" style="top:527.0px">66,81</div>
<div class="vb" style="left:747px;top:548px;height:15px"></div>
<div class="vb" style="left:1031px;top:548px;height:15px"></div>
<div class="vb" style="left:1318px;top:548px;height:15px"></div>
<div class="rt" style="top:548.0px">(=) Receita Total</div>
<div class="cv" style="left:891px;top:548.0px">6.814,31</div>
<div class="cv" style="left:1175px;top:548.0px">1.733,13</div>
<div class="rv" style="top:548.0px">8.547,44</div>
<div class="vb" style="left:747px;top:565px;height:15px"></div>
<div class="vb" style="left:1031px;top:565px;height:15px"></div>
<div class="vb" style="left:1318px;top:565px;height:15px"></div>
<div class="rt" style="top:565.0px">(-) Devolução de Recursos do FNDE (Valor Principal)</div>
<div class="cv" style="left:891px;top:565.0px">0,00</div>
<div class="cv" style="left:1175px;top:565.0px">0,00</div>
<div class="rv" style="top:565.0px">0,00</div>
<div class="vb" style="left:747px;top:583px;height:29px"></div>
<div class="vb" style="left:1031px;top:583px;height:29px"></div>
<div class="vb" style="left:1315px;top:583px;height:29px"></div>
<div class="vb" style="left:747px;top:614px;height:23px"></div>
<div class="vb" style="left:1031px;top:614px;height:23px"></div>
<div class="vb" style="left:1318px;top:614px;height:23px"></div>
<div class="rt" style="top:618.0px">(-) Despesa Realizada Aprovada</div>
<div class="inp" style="left:821px;top:614px">6.736,00</div>
<div class="inp" style="left:1105px;top:614px">1.684,00</div>
<div class="rv" style="top:618.0px">8.420,00</div>
<div class="vb" style="left:747px;top:639px;height:24px"></div>
<div class="vb" style="left:1031px;top:639px;height:24px"></div>
<div class="vb" style="left:1318px;top:639px;height:24px"></div>
<div class="rt" style="top:644.0px">(-) Despesa Realizada Não Aprovada</div>
<div class="inp" style="left:821px;top:639px">0,00</div>
<div class="inp" style="left:1105px;top:639px">0,00</div>
<div class="rv" style="top:644.0px">0,00</div>
<div class="vb" style="left:747px;top:665px;height:23px"></div>
<div class="vb" style="left:1031px;top:665px;height:23px"></div>
<div class="vb" style="left:1318px;top:665px;height:23px"></div>
<div class="rt" style="top:670.0px">(-) Saldo a Reprogramar para o Exercício Seguinte</div>
<div class="inp" style="left:821px;top:665px">78,31</div>
<div class="inp" style="left:1105px;top:665px">49,13</div>
<div class="rv" style="top:670.0px">127,44</div>
<div class="vb" style="left:747px;top:690px;height:15px"></div>
<div class="vb" style="left:1031px;top:690px;height:15px"></div>
<div class="vb" style="left:1318px;top:690px;height:15px"></div>
<div class="rt" style="top:691.0px">(=) Valor a Comprovar (Sem Prestação de Contas)</div>
<div class="cv" style="left:891px;top:691.0px">0,00</div>
<div class="cv" style="left:1175px;top:691.0px">0,00</div>
<div class="rv" style="top:691.0px">0,00</div>
<div class="btn" style="left:268px;top:588px;width:288px"><span style="left:9px;letter-spacing:-0.305px">Recurso Financeiro Devolvido - Registro de GRU *</span></div>
<div class="abs" style="left:253px;top:751px;font-size:10px;line-height:13px;color:#222;white-space:nowrap;letter-spacing:1.137px">* Ao acessar esta opção os dados da Execução Financeira serão gravados.</div>
<div class="abs" style="left:252px;top:775px;width:1297px;height:2px;background:#7fa3c6"></div>
<div class="btn" style="left:1304px;top:786px;width:81px"><svg class="abs" style="left:5px;top:4px" width="20" height="17" viewBox="0 0 20 17"><defs><linearGradient id="ckg" x1="0" y1="0" x2="0" y2="1"><stop offset="0" stop-color="#8fd12a"/><stop offset=".55" stop-color="#5fb41c"/><stop offset="1" stop-color="#3f9a1c"/></linearGradient></defs><ellipse cx="8.5" cy="15.8" rx="7.5" ry="1" fill="#9a9a9a" opacity=".55"/><path d="M3.2 8.6 L7.6 13.6 L15.6 2.8" fill="none" stroke="url(#ckg)" stroke-width="3.6" stroke-linecap="round" stroke-linejoin="round"/></svg><span style="left:30px;letter-spacing:-0.777px">Calcular</span></div>
<div class="btn" style="left:1390px;top:786px;width:75px"><svg class="abs" style="left:5px;top:4px" width="20" height="17" viewBox="0 0 20 17"><defs><linearGradient id="ckg" x1="0" y1="0" x2="0" y2="1"><stop offset="0" stop-color="#8fd12a"/><stop offset=".55" stop-color="#5fb41c"/><stop offset="1" stop-color="#3f9a1c"/></linearGradient></defs><ellipse cx="8.5" cy="15.8" rx="7.5" ry="1" fill="#9a9a9a" opacity=".55"/><path d="M3.2 8.6 L7.6 13.6 L15.6 2.8" fill="none" stroke="url(#ckg)" stroke-width="3.6" stroke-linecap="round" stroke-linejoin="round"/></svg><span style="left:31px;letter-spacing:-0.751px">Gravar</span></div>
<div class="btn" style="left:1471px;top:786px;width:73px"><svg class="abs" style="left:5px;top:4px" width="20" height="17" viewBox="0 0 20 17"><defs><linearGradient id="arg" x1="0" y1="0" x2="0" y2="1"><stop offset="0" stop-color="#93d32c"/><stop offset=".55" stop-color="#62b61d"/><stop offset="1" stop-color="#439c1c"/></linearGradient></defs><ellipse cx="10" cy="15.8" rx="7.5" ry="1" fill="#9a9a9a" opacity=".55"/><path d="M1.6 8 L8.8 1.8 V5 H18 V11 H8.8 V14.2 Z" fill="url(#arg)" stroke="url(#arg)" stroke-width="1" stroke-linejoin="round"/></svg><span style="left:30px;letter-spacing:-0.037px">Voltar</span></div>
<!-- /MAIN -->
</div></div>
<div id="vscroll">
<!-- SCROLL -->
<div class="abs" style="left:0;top:0;width:16px;height:761px;background:linear-gradient(90deg,#ededed 0%,#f3f3f3 50%,#f5f5f5 100%)"></div>
<svg class="abs" style="left:4.5px;top:7px" width="8" height="5" viewBox="0 0 8 5"><path d="M0.2 4.8 L4 0.6 L7.8 4.8 Z" fill="#3a3a3a"/></svg>
<svg class="abs" style="left:4.5px;top:750.5px" width="8" height="5" viewBox="0 0 8 5"><path d="M0.2 0.2 L4 4.4 L7.8 0.2 Z" fill="#3a3a3a"/></svg>
<div class="abs" style="left:0;top:156px;width:15px;height:587px;border:1px solid #979797;border-radius:2px;background:linear-gradient(90deg,#f4f4f4 0%,#ebebeb 40%,#dcdcdc 48%,#cfcfcf 60%,#c4c4c4 100%);box-shadow:inset 1px 0 0 #fff,inset 0 1px 0 #fff"></div>
<div class="abs" style="left:4px;top:445px;width:8px;height:9px;background:linear-gradient(180deg,rgba(255,255,255,.0) 0,rgba(255,255,255,0) 1px,#4a4a4a 1px,#4a4a4a 2px,#fff 2px,#fff 3px,rgba(255,255,255,0) 3px,rgba(255,255,255,0) 4px,#4a4a4a 4px,#4a4a4a 5px,#fff 5px,#fff 6px,rgba(255,255,255,0) 6px,rgba(255,255,255,0) 7px,#4a4a4a 7px,#4a4a4a 8px,#fff 8px,#fff 9px)"></div>

<!-- /SCROLL -->
</div>

<!-- ===== TASKBAR ===== -->
<div id="taskbar">
<!-- TASK -->
<style>
#taskbar .tb{position:absolute;top:2px;height:40px;border:1px solid rgba(20,50,90,.75);border-radius:3px;background:linear-gradient(180deg,rgba(255,255,255,.42) 0%,rgba(255,255,255,.24) 48%,rgba(255,255,255,.10) 52%,rgba(255,255,255,.16) 100%);box-shadow:inset 0 0 0 1px rgba(255,255,255,.45)}
#taskbar .tb.act{background:linear-gradient(180deg,rgba(255,255,255,.72) 0%,rgba(255,255,255,.52) 48%,rgba(255,255,255,.38) 52%,rgba(255,255,255,.5) 100%)}
#taskbar .ico{position:absolute}
#taskbar .tray{position:absolute;color:#fff;font-size:12px;white-space:nowrap}
</style>
<div class="abs" style="left:0;top:0;width:1584px;height:2px;background:#fff"></div><div class="abs" style="left:1584px;top:0;width:16px;height:2px;background:linear-gradient(90deg,#ededed 0%,#f3f3f3 50%,#f5f5f5 100%)"></div><div class="abs" style="left:0;top:2px;width:1600px;height:1px;background:#233f5c"></div><div class="abs" style="left:0;top:3px;width:1600px;height:1px;background:rgba(255,255,255,.42)"></div>
<div class="abs" style="left:0;top:4px;width:1400px;height:16px;background:linear-gradient(180deg,rgba(255,255,255,.10),rgba(255,255,255,.02));-webkit-mask-image:linear-gradient(90deg,#000 0%,#000 70%,rgba(0,0,0,0) 100%);mask-image:linear-gradient(90deg,#000 0%,#000 70%,rgba(0,0,0,0) 100%)"></div><svg class="abs" style="left:1040px;top:2px" width="130" height="40" viewBox="0 0 130 40"><path d="M20 0 C50 8 80 22 96 40 L104 40 C88 20 60 6 34 0 Z" fill="#9fd0f4" opacity=".55"/></svg>
<!-- start orb -->
<svg class="ico" style="left:7px;top:2px" width="40" height="40" viewBox="0 0 40 40">
 <defs><radialGradient id="orb" cx=".5" cy=".92" r=".95"><stop offset="0" stop-color="#3fd0f6"/><stop offset=".3" stop-color="#1f86c6"/><stop offset=".62" stop-color="#174e88"/><stop offset="1" stop-color="#102f58"/></radialGradient>
 <linearGradient id="orbh" x1="0" y1="0" x2="0" y2="1"><stop offset="0" stop-color="#fff" stop-opacity=".85"/><stop offset="1" stop-color="#fff" stop-opacity=".25"/></linearGradient>
 <linearGradient id="fr" x1="0" y1="0" x2="1" y2="1"><stop offset="0" stop-color="#e6401c"/><stop offset="1" stop-color="#f9a01f"/></linearGradient>
 <linearGradient id="fg" x1="0" y1="0" x2="1" y2="1"><stop offset="0" stop-color="#b5d85a"/><stop offset="1" stop-color="#5fa532"/></linearGradient>
 <linearGradient id="fb" x1="0" y1="0" x2="1" y2="1"><stop offset="0" stop-color="#8cc8f4"/><stop offset="1" stop-color="#1f78cf"/></linearGradient>
 <linearGradient id="fy" x1="0" y1="0" x2="1" y2="1"><stop offset="0" stop-color="#ffd84a"/><stop offset="1" stop-color="#f7a51c"/></linearGradient></defs>
 <circle cx="20" cy="20.5" r="18" fill="url(#orb)" stroke="#0d3358" stroke-width="1"/><circle cx="20" cy="20.5" r="16.8" fill="none" stroke="#a9d4ee" stroke-width=".9" opacity=".75"/>
 <path d="M3.8 19 A16.3 16.3 0 0 1 36.2 19 C28 23.4 12 23.4 3.8 19 Z" fill="url(#orbh)" opacity=".5"/>
 <path d="M10.6 10.4 C13.6 8 16.6 8 19.6 9.8 L18 18.4 C15.2 17 12.2 17 9 19 Z" fill="url(#fr)"/>
 <path d="M21.4 10.6 C24.4 12.2 27.4 12.2 30.8 9.8 L29.2 18.6 C26 20.8 23 20.8 19.8 19.2 Z" fill="url(#fg)"/>
 <path d="M8.6 20.8 C11.8 18.8 14.8 18.8 17.6 20.2 L16 28.8 C13.2 27.4 10.2 27.4 7 29.6 Z" fill="url(#fb)"/>
 <path d="M19.4 21.2 C22.6 22.8 25.6 22.8 28.8 20.6 L27.2 29.2 C24 31.4 21 31.4 17.8 29.8 Z" fill="url(#fy)"/>
</svg>
<!-- IE -->
<svg class="ico" style="left:72px;top:4px" width="36" height="36" viewBox="0 0 36 36">
 <defs><linearGradient id="ieg" x1="0" y1="0" x2="0" y2="1"><stop offset="0" stop-color="#8fe0fb"/><stop offset=".5" stop-color="#35b9f0"/><stop offset="1" stop-color="#1b8fd6"/></linearGradient>
 <linearGradient id="iey" x1="0" y1="1" x2="1" y2="0"><stop offset="0" stop-color="#f3b41c"/><stop offset=".5" stop-color="#ffd84a"/><stop offset="1" stop-color="#f0a818"/></linearGradient></defs>
 <path d="M19 6 C11.4 6 6.4 11.6 6.4 18.4 C6.4 25.6 11.6 30.6 19 30.6 C24.6 30.6 28.8 27.6 30.8 23 H23.6 C22.6 24.6 21 25.4 19 25.4 C15.8 25.4 13.8 23.2 13.4 20.2 H31.6 C32.2 11.8 26.8 6 19 6 Z M13.6 15.8 C14.2 13.2 16.2 11.4 19 11.4 C21.8 11.4 24 13.2 24.4 15.8 Z" fill="url(#ieg)" stroke="#1a83c8" stroke-width=".7"/>
 <path d="M4 31.6 C-0.6 25.4 9 8.6 23 3.6 C29.6 1.4 34.6 3.2 33 9.4 C32.6 6.4 28.8 5.6 23.6 7.8 C13.4 12.2 5.2 25.6 7.6 29.8 C8.6 31.6 11.8 31 14 29.8 C10.6 33 5.8 34.2 4 31.6 Z" fill="url(#iey)" stroke="#dd9c14" stroke-width=".4"/>
</svg>
<!-- media player -->
<svg class="ico" style="left:135px;top:7px" width="32" height="30" viewBox="0 0 32 30">
 <rect x="10" y="2.5" width="17" height="23" fill="#a9cde8" stroke="#7fb0d6" stroke-width=".8" opacity=".9"/><rect x="7" y="3.5" width="17" height="23" fill="#bcd9ee" stroke="#86b6da" stroke-width=".8"/><rect x="3" y="4.5" width="18" height="23" fill="#8cbfe3" stroke="#6aa3cf" stroke-width=".8"/>
 <circle cx="13" cy="15.5" r="9" fill="#f47b1c" stroke="#e0600c" stroke-width=".8"/><path d="M9.8 9.8 L19.6 15.5 L9.8 21.2 Z" fill="#fff"/>
</svg>
<!-- explorer button -->
<div class="tb" style="left:239px;width:4px;border-left:none;border-radius:0 3px 3px 0"></div>
<div class="tb" style="left:183px;width:55px"></div>
<svg class="ico" style="left:192px;top:7px" width="36" height="32" viewBox="0 0 36 32">
 <path d="M3 6 H12 L14 8.5 H20 V27 H3 Z" fill="#f7e29a" stroke="#d5ae48" stroke-width=".8"/>
 <path d="M14 10 H23 L25 12.5 H33 V27 H14 Z" fill="#f3d67e" stroke="#d1a63e" stroke-width=".8"/>
 <rect x="5" y="3.6" width="8" height="2.4" fill="#fff"/><rect x="13.5" y="6.1" width="8" height="2.4" fill="#fff"/><rect x="22" y="8.6" width="9" height="2.4" fill="#fff"/><rect x="5" y="3.6" width="3.4" height="2.4" fill="#17b03a"/><rect x="13.5" y="6.1" width="3.4" height="2.4" fill="#d8342a"/><rect x="22" y="8.6" width="3.4" height="2.4" fill="#2e8de0"/>
 <path d="M3 12 H33 V27 H3 Z" fill="#f9e7a6" stroke="#d5ae48" stroke-width=".8" opacity=".92"/>
 <path d="M6 30 V21 C6 19.5 7 18.5 8.5 18.5 H27 C28.5 18.5 29.5 19.5 29.5 21 V30 H24.5 V24 H11 V30 Z" fill="#a8d3f0" stroke="#6fa9d6" stroke-width=".8" opacity=".95"/>
 <path d="M6.5 21 C6.5 19.8 7.4 19 8.6 19 H27 C28 19 29 19.8 29 21 V22.5 H6.5 Z" fill="#e3f2fc" opacity=".9"/>
</svg>
<!-- outlook -->
<svg class="ico" style="left:257px;top:4px" width="36" height="36" viewBox="0 0 36 36">
 <defs><linearGradient id="olf" x1="0" y1="0" x2="1" y2="1"><stop offset="0" stop-color="#fff3dc"/><stop offset="1" stop-color="#fbd9a0"/></linearGradient>
 <radialGradient id="olc" cx=".4" cy=".3" r=".8"><stop offset="0" stop-color="#fff0a0"/><stop offset=".6" stop-color="#fbd045"/><stop offset="1" stop-color="#eda51a"/></radialGradient></defs>
 <path d="M3 8 C3 4.6 5.4 2.6 8.6 2.6 H29 V28.4 H3 Z" fill="url(#olf)" stroke="#f09a14" stroke-width="1.4"/>
 <path d="M7 11.6 L33.4 8.6 V27.2 L8.4 29.4 Z" fill="#fffaf0" stroke="#e6d2a4" stroke-width=".7"/><path d="M7.4 12 L19 21.6 L33 9.4" fill="none" stroke="#dfa53a" stroke-width="1.1"/>
 <circle cx="18.6" cy="22" r="8.6" fill="url(#olc)" stroke="#dc9814" stroke-width="1"/>
 <path d="M14.6 19.4 L18.8 23.2 L23.8 20.2" fill="none" stroke="#c98a10" stroke-width="1.7"/>
</svg>
<!-- chrome -->
<svg class="ico" style="left:321px;top:6px" width="32" height="32" viewBox="0 0 48 48">
 <circle cx="24" cy="24" r="22" fill="#fff"/>
 <path d="M24 2 A22 22 0 0 1 43.05 13 H24 A11 11 0 0 0 14.47 18.5 L4.95 13 A22 22 0 0 1 24 2 Z" fill="#db4437"/>
 <path d="M43.05 13 A22 22 0 0 1 24 46 L33.53 29.5 A11 11 0 0 0 33.53 18.5 L24 13 Z" fill="#ffcd40"/>
 <path d="M24 46 A22 22 0 0 1 4.95 13 L14.47 29.5 A11 11 0 0 0 24 35 L33.53 29.5 Z" fill="#0f9d58"/>
 <path d="M4.95 13 L14.47 29.5 A11 11 0 0 1 14.47 18.5 Z" fill="#0f9d58"/>
 <circle cx="24" cy="24" r="10" fill="#fff"/><circle cx="24" cy="24" r="8" fill="#4285f4"/>
</svg>
<!-- notepad++ -->
<div class="tb" style="left:369px;width:60px"></div>
<svg class="ico" style="left:385px;top:5px" width="32" height="34" viewBox="0 0 32 34">
 <defs><pattern id="npp" width="2" height="2" patternUnits="userSpaceOnUse"><rect width="2" height="2" fill="#18e040"/><rect width="1" height="1" fill="#d8ffd8"/><rect x="1" y="1" width="1" height="1" fill="#0a9a28"/></pattern></defs>
 <path d="M2 1 H26 V24 L19 31 H2 Z" fill="url(#npp)" stroke="#0b1a0b" stroke-width="1.1"/>
 <path d="M4 5 H24 M4 8.5 H24 M4 12 H24 M4 15.5 H24 M4 19 H22 M4 22.5 H19 M4 26 H17" stroke="#05b52c" stroke-width="1.3"/>
 <path d="M19 31 V24 H26 Z" fill="#e8e8e8" stroke="#333" stroke-width=".8"/>
 <path d="M28.5 4 L31.5 7 L18.5 22.5 L14 25.5 L15.5 20 Z" fill="#f4ea1e" stroke="#222" stroke-width="1"/><path d="M14 25.5 L15 21.8 L17.4 24 Z" fill="#222"/>
 <path d="M29 6.4 L17.4 20.4" stroke="#fffbd0" stroke-width="1"/>
</svg>
<!-- firefox (active) -->
<div class="tb act" style="left:431px;width:60px"></div>
<svg class="ico" style="left:444px;top:4px" width="34" height="34" viewBox="0 0 34 34">
 <defs><radialGradient id="ffg" cx=".45" cy=".3" r=".75"><stop offset="0" stop-color="#59b4ee"/><stop offset=".5" stop-color="#1f6ccc"/><stop offset="1" stop-color="#102c7a"/></radialGradient>
 <linearGradient id="fff" x1="0" y1="0" x2=".6" y2="1"><stop offset="0" stop-color="#f79a1c"/><stop offset=".45" stop-color="#f0651a"/><stop offset="1" stop-color="#d9401b"/></linearGradient>
 <linearGradient id="ffy" x1="0" y1="0" x2="0" y2="1"><stop offset="0" stop-color="#fde44a"/><stop offset=".6" stop-color="#f9a51c"/><stop offset="1" stop-color="#ec6a1a"/></linearGradient></defs>
 <circle cx="16.6" cy="18.4" r="13.8" fill="url(#fff)"/>
 <path d="M27 5.5 C31.5 9 33 15 31.5 20.5 C30 26 26 30 21 31.6 C26 28 28.4 22.4 27.6 17 C27.2 12.6 26.6 9 27 5.5 Z" fill="url(#ffy)"/>
 <circle cx="19.4" cy="13.8" r="10.6" fill="url(#ffg)"/>
 <path d="M3.6 9.6 C4 6 6.2 4.6 7.8 7 C10.4 5.6 13 6 14.8 8 C12.8 8.2 11.8 9.2 12 10.6 C14.4 10 16.6 10.8 17.4 12.6 C15.4 12.6 14.2 13.4 14 14.8 C15.4 17 18.6 17.6 22 16 C21.2 19.4 17.6 21.4 13.6 20.4 C10.4 19.6 8.4 17.6 7.6 15 C6 16.4 5.6 19 6.6 22 C3.6 18.6 2.6 14 3.6 9.6 Z" fill="url(#fff)"/>
 <path d="M12.4 10.9 C14 10.7 15.4 11.2 16 12.3 C14.8 12.2 13.6 12.6 13 13.4 Z" fill="#fbe3c4"/>
 <path d="M9 24 C12 28.4 18 29.6 23 27 C26.6 25 28.2 21.6 28 17.6 C29.6 21.6 28.6 26 25.2 29 C21 32.4 14.6 32.6 10.4 29 C8.8 27.6 8.4 25.6 9 24 Z" fill="#e2521b" opacity=".55"/>
</svg>
<!-- excel -->
<div class="tb" style="left:549px;width:4px;border-left:none;border-radius:0 3px 3px 0"></div>
<div class="tb" style="left:493px;width:56px"></div>
<svg class="ico" style="left:503px;top:4px" width="34" height="34" viewBox="0 0 34 34">
 <path d="M2 12 C2 6 6 2 12 2 H27 V30 H2 Z" fill="#dfeed6" stroke="#55a424" stroke-width="1.4"/>
 <path d="M2.8 12 C2.8 6.6 6.6 2.8 12 2.8 H20 C14 6 8 12 2.8 20 Z" fill="#fff" opacity=".7"/>
 <path d="M7 11.5 L32 9 L31 31 L6 30 Z" fill="#f4f8ee" stroke="#c9d8bc" stroke-width=".6"/>
 <g fill="#5d9d3a"><path d="M23.2 11.6 L30 11 L29.8 14.8 L23 15.2 Z"/><path d="M22.8 16.8 L29.7 16.5 L29.5 20.4 L22.6 20.6 Z"/><path d="M22.4 22.2 L29.4 22 L29.2 28.2 L22.2 27.8 Z"/><path d="M15 22.6 L21 22.4 L20.8 27.8 L14.6 27.4 Z"/><path d="M8 22.8 L13.6 22.6 L13.2 27.4 L7.6 27 Z"/></g>
 <path d="M9 12.4 L13.6 12 L16 15.2 L18.6 11.6 L22.4 11.4 L18 16.6 L22 21 L17.6 21.2 L15.4 18.4 L13 21.4 L8.6 21.6 L13.2 16.6 Z" fill="#2b7a1e"/>
</svg>
<!-- calculator -->
<div class="tb" style="left:555px;width:60px"></div>
<svg class="ico" style="left:573px;top:5px" width="24" height="32" viewBox="0 0 24 32">
 <rect x="1" y="1" width="22" height="30" rx="1.5" fill="#c9dff2" stroke="#6d9cc8" stroke-width="1"/>
 <rect x="3" y="3" width="18" height="2.4" fill="#f5a83a"/><rect x="3" y="5.6" width="18" height="7.4" fill="#eef6fd" stroke="#8fb4d6" stroke-width=".6"/>
 <text x="19.5" y="12" font-family="Liberation Mono" font-size="7.5" text-anchor="end" fill="#2a4f8a">0</text>
 <g fill="#f7fbff" stroke="#8fb4d6" stroke-width=".4"><rect x="3.2" y="15.5" width="2.8" height="2.6"/><rect x="7" y="15.5" width="2.8" height="2.6"/><rect x="10.8" y="15.5" width="2.8" height="2.6"/><rect x="14.6" y="15.5" width="2.8" height="2.6"/><rect x="18.4" y="15.5" width="2.6" height="2.6"/>
 <rect x="3.2" y="19.3" width="2.8" height="2.6"/><rect x="7" y="19.3" width="2.8" height="2.6"/><rect x="10.8" y="19.3" width="2.8" height="2.6"/><rect x="14.6" y="19.3" width="2.8" height="2.6"/>
 <rect x="3.2" y="23.1" width="2.8" height="2.6"/><rect x="7" y="23.1" width="2.8" height="2.6"/><rect x="10.8" y="23.1" width="2.8" height="2.6"/><rect x="14.6" y="23.1" width="2.8" height="2.6"/>
 <rect x="3.2" y="26.9" width="2.8" height="2.6"/><rect x="7" y="26.9" width="2.8" height="2.6"/><rect x="10.8" y="26.9" width="2.8" height="2.6"/><rect x="14.6" y="26.9" width="2.8" height="2.6"/></g>
 <rect x="18.4" y="19.3" width="2.6" height="10.2" fill="#f5a83a"/>
</svg>
<!-- tray -->
<div class="tray" style="left:1407.5px;top:13px;font-size:12px;letter-spacing:.1px;color:#e8eef6">PT</div>
<svg class="ico" style="left:1437px;top:19.5px" width="9" height="6" viewBox="0 0 11 7"><path d="M0.5 6.5 L5.5 0.8 L10.5 6.5 Z" fill="#fff"/></svg>
<svg class="ico" style="left:1457px;top:13.5px" width="18" height="18" viewBox="0 0 18 18">
 <rect x="5.5" y="4" width="11.5" height="9" fill="#1e4b7c" stroke="#fff" stroke-width="1.2"/><path d="M8 16.5 H15 M11.5 13 V16.5" stroke="#fff" stroke-width="1.3"/>
 <path d="M2 2 V6 M5 2 V6 M1.2 6 H5.8 V8.4 H1.2 Z M3.5 8.4 V15.5 H6.5" fill="none" stroke="#fff" stroke-width="1.2"/>
</svg>
<svg class="ico" style="left:1481px;top:12px" width="18" height="20" viewBox="0 0 18 20">
 <path d="M2 2 V17.5" stroke="#fff" stroke-width="1.6"/><path d="M3 3 C6 1.5 8 4 10.5 3 V9.5 C8 10.5 6 8 3 9.5 Z" fill="#fff"/><path d="M10.5 5 C12.5 6 14 5.4 15.6 4.6 L13.5 8 L15.2 11 C13.5 11.6 12 11.6 10.5 10.6 Z" fill="#e6ecf4"/>
 <path d="M11.5 8.5 L17 18 H6 Z" fill="#f6d21e" stroke="#b89410" stroke-width=".6"/><rect x="11" y="11.5" width="1.2" height="3.4" fill="#222"/><rect x="11" y="15.6" width="1.2" height="1.2" fill="#222"/>
</svg>
<div class="tray" style="left:1531px;top:8px;font-size:12px;letter-spacing:-0.25px">08:00</div>
<div class="tray" style="left:1515.5px;top:25px;font-size:12.2px;letter-spacing:-0.3px">18/03/2016</div>
<div class="abs" style="left:1585px;top:3px;width:15px;height:39px;border:1px solid rgba(190,215,240,.55);border-right:none;background:linear-gradient(180deg,rgba(255,255,255,.22) 0%,rgba(255,255,255,.06) 40%,rgba(40,110,190,.35) 100%)"></div>

<!-- /TASK -->
</div>
</body>
</html>
